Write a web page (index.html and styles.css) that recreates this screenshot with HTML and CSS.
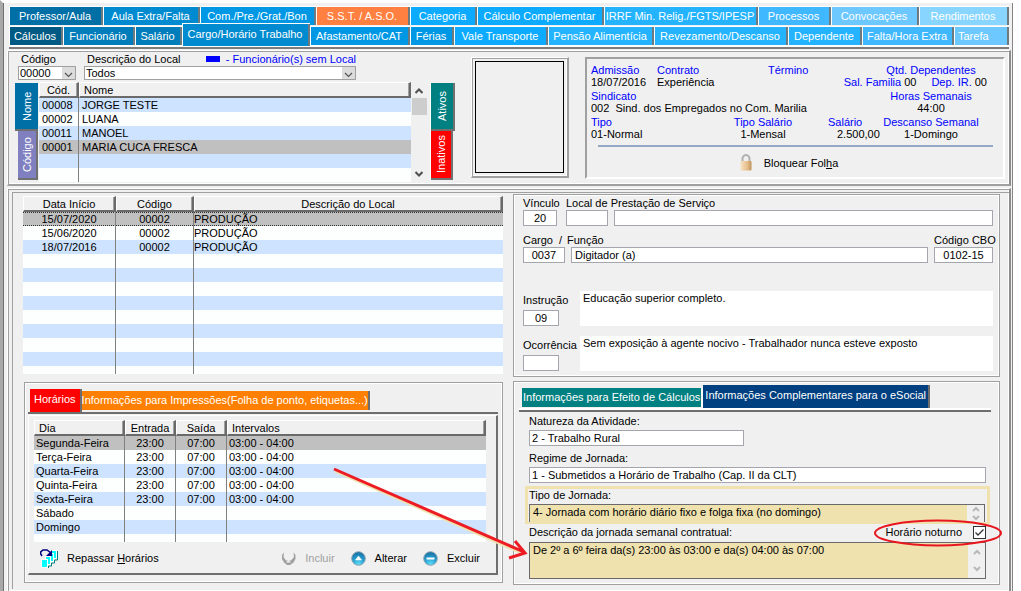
FILE: index.html
```html
<!DOCTYPE html>
<html lang="pt-BR">
<head>
    <meta charset="UTF-8">
    <meta name="viewport" content="width=device-width, initial-scale=1.0">
    <title>Cargo/Horário Trabalho</title>
    <link rel="stylesheet" href="styles.css">
</head>
<body>
<div class="app">

    <!-- Abas principais -->
    <nav class="tabs">
        <div class="tab-row row-top">
            <button class="tab b1">Professor/Aula</button>
            <button class="tab b3">Aula Extra/Falta</button>
            <button class="tab b4">Com./Pre./Grat./Bon</button>
            <button class="tab sst">S.S.T. / A.S.O.</button>
            <button class="tab b5">Categoria</button>
            <button class="tab b5">Cálculo Complementar</button>
            <button class="tab b6">IRRF Min. Relig./FGTS/IPESP</button>
            <button class="tab b7">Processos</button>
            <button class="tab b8">Convocações</button>
            <button class="tab b9">Rendimentos</button>
        </div>
        <div class="tab-row row-bottom">
            <button class="tab b0">Cálculos</button>
            <button class="tab b2">Funcionário</button>
            <button class="tab b2">Salário</button>
            <button class="tab b3 active">Cargo/Horário Trabalho</button>
            <button class="tab b4">Afastamento/CAT</button>
            <button class="tab b4">Férias</button>
            <button class="tab b5">Vale Transporte</button>
            <button class="tab b6">Pensão Alimentícia</button>
            <button class="tab b6">Revezamento/Descanso</button>
            <button class="tab b6">Dependente</button>
            <button class="tab b7">Falta/Hora Extra</button>
            <button class="tab b8 last">Tarefa</button>
        </div>
    </nav>

    <!-- Funcionários -->
    <section class="panel upper">
        <div class="people">
            <div class="filters">
                <div class="filter-code">
                    <label for="codigo">Código</label>
                    <select id="codigo"><option>00000</option></select>
                </div>
                <div class="filter-local">
                    <div class="filter-head">
                        <label for="local">Descrição do Local</label>
                        <span class="legend"><i></i>- Funcionário(s) sem Local</span>
                    </div>
                    <select id="local"><option>Todos</option></select>
                </div>
            </div>
            <div class="listing">
                <div class="side-tabs left">
                    <button class="side nome">Nome</button>
                    <button class="side codigo">Código</button>
                </div>
                <table class="grid people-grid">
                    <colgroup><col class="c-cod"><col></colgroup>
                    <thead><tr><th class="center">Cód.</th><th>Nome</th></tr></thead>
                    <tbody>
                        <tr><td>00008</td><td>JORGE TESTE</td></tr>
                        <tr><td>00002</td><td>LUANA</td></tr>
                        <tr><td>00011</td><td>MANOEL</td></tr>
                        <tr class="selected"><td>00001</td><td>MARIA CUCA FRESCA</td></tr>
                        <tr><td></td><td></td></tr>
                        <tr><td></td><td></td></tr>
                    </tbody>
                </table>
                <div class="scrollbar">
                    <svg width="8" height="8" viewBox="0 0 8 8"><path d="M0.500 6 L4 2.500 L7.500 6"/></svg>
                    <span class="thumb"></span>
                    <svg class="down" width="8" height="8" viewBox="0 0 8 8"><path d="M0.500 2 L4 5.500 L7.500 2"/></svg>
                </div>
                <div class="side-tabs right">
                    <button class="side ativos">Ativos</button>
                    <button class="side inativos">Inativos</button>
                </div>
            </div>
        </div>

        <div class="photo"><div class="photo-inner"></div></div>

        <div class="info">
            <div class="info-row r1">
                <div><b>Admissão</b><span>18/07/2016</span></div>
                <div><b>Contrato</b><span>Experiência</span></div>
                <div><b>Término</b></div>
                <div class="mid"><b>Qtd. Dependentes</b>
                    <div class="deps"><b>Sal. Familia</b><span>00</span><b class="ir">Dep. IR.</b><span>00</span></div>
                </div>
            </div>
            <div class="info-row r2">
                <div><b>Sindicato</b><span>002&nbsp; Sind. dos Empregados no Com. Marilia</span></div>
                <div class="mid"><b>Horas Semanais</b><span>44:00</span></div>
            </div>
            <div class="info-row r3">
                <div><b>Tipo</b><span>01-Normal</span></div>
                <div class="mid"><b>Tipo Salário</b><span>1-Mensal</span></div>
                <div class="salary"><b>Salário</b><span>2.500,00</span></div>
                <div class="mid"><b>Descanso Semanal</b><span>1-Domingo</span></div>
            </div>
            <hr>
            <button class="action lock">
                <svg width="12" height="17" viewBox="0 0 12 17">
                    <defs><linearGradient id="gold"><stop offset="0" stop-color="#f7e3c4"/><stop offset="0.600" stop-color="#e6c08c"/><stop offset="1" stop-color="#c2935a"/></linearGradient></defs>
                    <path d="M2.500 9V5a3.500 4 0 0 1 7 0v4" fill="none" stroke="#b0b0b0" stroke-width="2"/>
                    <rect x="0.500" y="7" width="11" height="9.500" rx="1" fill="url(#gold)"/>
                </svg>
                <span>Bloquear Fol<u>h</u>a</span>
            </button>
        </div>
    </section>

    <section class="panel lower">
        <div class="lower-inner">
            <div class="column">
                <table class="grid history">
                    <colgroup><col class="c-data"><col class="c-codigo"><col></colgroup>
                    <thead><tr><th>Data Início</th><th>Código</th><th>Descrição do Local</th></tr></thead>
                    <tbody>
                        <tr class="selected focus"><td>15/07/2020</td><td>00002</td><td>PRODUÇÃO</td></tr>
                        <tr><td>15/06/2020</td><td>00002</td><td>PRODUÇÃO</td></tr>
                        <tr><td>18/07/2016</td><td>00002</td><td>PRODUÇÃO</td></tr>
                        <tr><td></td><td></td><td></td></tr>
                        <tr><td></td><td></td><td></td></tr>
                        <tr><td></td><td></td><td></td></tr>
                        <tr><td></td><td></td><td></td></tr>
                        <tr><td></td><td></td><td></td></tr>
                        <tr><td></td><td></td><td></td></tr>
                        <tr><td></td><td></td><td></td></tr>
                        <tr><td></td><td></td><td></td></tr>
                        <tr class="cut"><td></td><td></td><td></td></tr>
                    </tbody>
                </table>

                <div class="box hours">
                    <div class="sub-tabs">
                        <button class="sub red">Horários</button>
                        <button class="sub orange">Informações para Impressões(Folha de ponto, etiquetas...)</button>
                    </div>
                    <div class="sheet">
                        <table class="grid schedule">
                            <colgroup><col class="c-dia"><col class="c-hora"><col class="c-hora"><col></colgroup>
                            <thead><tr><th>Dia</th><th class="center">Entrada</th><th class="center">Saída</th><th>Intervalos</th></tr></thead>
                            <tbody>
                                <tr class="selected"><td>Segunda-Feira</td><td>23:00</td><td>07:00</td><td>03:00 - 04:00</td></tr>
                                <tr><td>Terça-Feira</td><td>23:00</td><td>07:00</td><td>03:00 - 04:00</td></tr>
                                <tr><td>Quarta-Feira</td><td>23:00</td><td>07:00</td><td>03:00 - 04:00</td></tr>
                                <tr><td>Quinta-Feira</td><td>23:00</td><td>07:00</td><td>03:00 - 04:00</td></tr>
                                <tr><td>Sexta-Feira</td><td>23:00</td><td>07:00</td><td>03:00 - 04:00</td></tr>
                                <tr><td>Sábado</td><td></td><td></td><td></td></tr>
                                <tr><td>Domingo</td><td></td><td></td><td></td></tr>
                                <tr class="cut"><td></td><td></td><td></td><td></td></tr>
                            </tbody>
                        </table>
                        <div class="actions">
                            <button class="action">
                                <svg width="18" height="19" viewBox="0 0 18 19">
                                    <path d="M17.500 2v9h-3v3h-3v3h-3v2H2" fill="none" stroke="#007c7c"/>
                                    <g fill="#00ffff" stroke="#fff" stroke-width="1">
                                        <rect x="11.500" y="1.500" width="5" height="8"/>
                                        <rect x="8.500" y="4.500" width="5" height="8"/>
                                        <rect x="5.500" y="7.500" width="5" height="8"/>
                                        <rect x="1.500" y="10.500" width="6" height="8"/>
                                    </g>
                                    <path d="M2 7L0.700 5V3L3 1h4l4 3" fill="none" stroke="#000080" stroke-width="1.500"/>
                                    <path d="M12 1v6H6z" fill="#000080"/>
                                </svg>
                                <span>Repassar <u>H</u>orários</span>
                            </button>
                            <button class="action push" disabled>
                                <svg width="15" height="15" viewBox="0 0 15 15">
                                    <path d="M3 1.500L1 4v4l2 3.500L6 14h3l3.500-2.500L14.500 8V4l-2-2.500L13 6l-3 3.500H5L2.500 6z" fill="#a0a0a0"/>
                                    <path d="M5 11.500l2.500-3 2.500 3z" fill="#f0f0f0"/>
                                </svg>
                                <span>Incluir</span>
                            </button>
                            <button class="action">
                                <svg width="15" height="15" viewBox="0 0 15 15">
                                    <defs><radialGradient id="blue" cx="0.500" cy="0.900" r="0.900"><stop offset="0" stop-color="#5cdcf8"/><stop offset="0.550" stop-color="#2399cc"/><stop offset="1" stop-color="#1a6a9c"/></radialGradient></defs>
                                    <circle cx="7.500" cy="7.500" r="6.800" fill="url(#blue)" stroke="#8aa4b4"/>
                                    <path d="M4.500 9L7.500 5l3 4z" fill="#fff" stroke="#fff" stroke-width="0.500"/>
                                </svg>
                                <span>Alterar</span>
                            </button>
                            <button class="action">
                                <svg width="15" height="15" viewBox="0 0 15 15">
                                    <circle cx="7.500" cy="7.500" r="6.800" fill="url(#blue)" stroke="#8aa4b4"/>
                                    <rect x="3.500" y="6.500" width="8" height="2" fill="#fff"/>
                                </svg>
                                <span>Excluir</span>
                            </button>
                        </div>
                    </div>
                </div>
            </div>

            <div class="column">
                <div class="box job">
                    <div class="line">
                        <div class="field w-sm"><label for="vinculo">Vínculo</label><input id="vinculo" class="center" value="20"></div>
                        <div class="field w-md"><label for="prest">Local de Prestação de Serviço</label><input id="prest"></div>
                        <div class="field grow"><input aria-label="Local de Prestação de Serviço"></div>
                    </div>
                    <div class="line">
                        <div class="field w-md"><label for="cargo">Cargo&nbsp; /</label><input id="cargo" class="center" value="0037"></div>
                        <div class="field grow funcao"><label for="funcao">Função</label><input id="funcao" value="Digitador (a)"></div>
                        <div class="field w-lg"><label for="cbo">Código CBO</label><input id="cbo" class="center" value="0102-15"></div>
                    </div>
                    <div class="line notes first">
                        <div class="field w-note"><label for="instr">Instrução</label><input id="instr" class="center" value="09"></div>
                        <textarea aria-label="Instrução">Educação superior completo.</textarea>
                    </div>
                    <div class="line notes">
                        <div class="field w-note"><label for="ocor">Ocorrência</label><input id="ocor"></div>
                        <textarea aria-label="Ocorrência">Sem exposição à agente nocivo - Trabalhador nunca esteve exposto</textarea>
                    </div>
                </div>

                <div class="box esocial">
                    <div class="sub-tabs esocial-tabs">
                        <button class="sub teal">Informações para Efeito de Cálculos</button>
                        <button class="sub navy">Informações Complementares para o eSocial</button>
                    </div>
                    <div class="form">
                        <div class="field short"><label for="nat">Natureza da Atividade:</label><input id="nat" value="2 - Trabalho Rural"></div>
                        <div class="field"><label for="regime">Regime de Jornada:</label><input id="regime" value="1 - Submetidos a Horário de Trabalho (Cap. II da CLT)"></div>
                        <div class="field marked">
                            <label for="tipo">Tipo de Jornada:</label>
                            <div class="memo">
                                <textarea id="tipo">4- Jornada com horário diário fixo e folga fixa (no domingo)</textarea>
                                <div class="memo-bar">
                                    <svg width="8" height="6" viewBox="0 0 8 6"><path d="M1 5l3-3 3 3"/></svg>
                                    <svg width="8" height="6" viewBox="0 0 8 6"><path d="M1 1l3 3 3-3"/></svg>
                                </div>
                            </div>
                        </div>
                        <div class="describe">
                            <label for="descr">Descrição da jornada semanal contratual:</label>
                            <div class="night">
                                <label for="noturno">Horário noturno</label>
                                <input type="checkbox" id="noturno" checked>
                                <svg class="ring" width="130" height="28" viewBox="0 0 130 28"><ellipse cx="65" cy="14" rx="63" ry="12.500"/></svg>
                            </div>
                        </div>
                        <div class="memo tall">
                            <textarea id="descr">De 2º a 6º feira da(s) 23:00 às 03:00 e da(s) 04:00 às 07:00</textarea>
                            <div class="memo-bar">
                                <svg width="8" height="6" viewBox="0 0 8 6"><path d="M1 5l3-3 3 3"/></svg>
                                <svg width="8" height="6" viewBox="0 0 8 6"><path d="M1 1l3 3 3-3"/></svg>
                            </div>
                        </div>
                    </div>
                    <svg class="arrow" width="200" height="100" viewBox="0 0 200 100">
                        <path class="halo" d="M4 5L193 88"/>
                        <path d="M3 3L193 86M184 75L194 87L178 92"/>
                    </svg>
                </div>
            </div>
        </div>
    </section>
</div>
</body>
</html>
```

FILE: styles.css
```css
* {
    box-sizing: border-box;
}
body {
    margin: 0;
    background: #f0f0f0;
    color: #000;
    font: 11px/13px "Liberation Sans", Arial, sans-serif;
}
button, input, select, textarea {
    font: inherit;
    color: inherit;
    margin: 0;
    border-radius: 0;
}
button {
    border: none;
    padding: 0;
    white-space: nowrap;
    cursor: pointer;
}
label {
    white-space: nowrap;
}
.app {
    display: flex;
    flex-direction: column;
    min-height: 100vh;
    padding-left: 1px;
    border-left: 3px solid #a8a8a8;
    border-right: 8px solid #fff;
    border-top: 3px solid #fff;
    box-shadow: inset -1px 0 #858585, inset 1px 0 #707070;
}

/* abas */
.tabs {
    margin: 0 4px 1px 5px;
    padding-top: 3px;
    border-bottom: 2px solid #7c7c7c;
    box-shadow: inset 0 -2px #fff;
    padding-bottom: 2px;
}
.tab-row {
    display: grid;
    grid-auto-rows: 19px;
    margin-bottom: 1px;
}
.row-top {
    grid-template-columns: 94fr 97fr 116fr 94fr 67fr 127fr 154fr 73fr 88fr 90fr;
}
.row-bottom {
    grid-template-columns: 54fr 72fr 47fr 128fr 100fr 44fr 94fr 106fr 134fr 74fr 92fr 55fr;
    margin-bottom: 0;
}
.tab {
    min-width: 0;
    padding-right: 3px;
    color: #fff;
    border: solid #fff;
    border-width: 1px 0 0 1px;
    box-shadow: inset -2px 0 #6d7a80;
    text-align: center;
}
.tab.active {
    margin-top: -3px;
    height: 23px;
    padding-bottom: 2px;
    position: relative;
}
.tab.last {
    text-align: left;
    padding-left: 3px;
}
.b0 { background: #005a83; }
.b1 { background: #006fa6; }
.b2 { background: #007dba; }
.b3 { background: #008ad0; }
.b4 { background: #0098e4; }
.b5 { background: #0cabff; }
.b6 { background: #24b4ff; }
.b7 { background: #40b8ff; }
.b8 { background: #6cc8ff; }
.b9 { background: #88d6ff; }
.sst { background: #ff8040; }

/* painéis */
.panel {
    margin: 0 2px 0 3px;
    border: solid #fff;
    border-width: 1px 0 0 1px;
    border-right: 2px solid #8c8c8c;
    border-bottom: 2px solid #a0a0a0;
    box-shadow: inset 1px 1px #a0a0a0, inset -1px -1px #fff;
}
.upper {
    display: grid;
    grid-template-columns: minmax(0, 440fr) 98px minmax(0, 420fr);
    padding: 1px 4px 2px 7px;
    column-gap: 16px;
}
.filters {
    display: flex;
    gap: 8px;
    padding-left: 3px;
}
.filters label {
    display: block;
    line-height: 14px;
    padding-left: 3px;
}
.filter-code {
    width: 58px;
}
.filter-local {
    width: 272px;
}
.filter-head {
    display: flex;
    justify-content: space-between;
}
.legend {
    display: flex;
    align-items: center;
    gap: 6px;
    color: #00f;
    white-space: nowrap;
}
.legend i {
    width: 14px;
    height: 6px;
    background: #00f;
}
select {
    display: block;
    width: 100%;
    height: 14px;
    padding: 0 14px 0 1px;
    border: 1px solid #a0a0a0;
    appearance: none;
    line-height: 12px;
    background: #fff url("data:image/svg+xml,%3Csvg xmlns='http://www.w3.org/2000/svg' width='13' height='12'%3E%3Crect width='13' height='12' fill='%23dcdcdc'/%3E%3Cpath d='M3 6l3.500 3.500L10 6' fill='none' stroke='%23555' stroke-width='1.200'/%3E%3C/svg%3E") no-repeat right center;
}
.listing {
    display: flex;
    margin-top: 2px;
}
.side-tabs {
    display: flex;
    flex-direction: column;
    padding-top: 1px;
}
.side-tabs.left {
    width: 24px;
    align-items: flex-end;
    padding-right: 1px;
}
.side-tabs.right {
    width: 25px;
    margin-left: 3px;
    align-items: flex-start;
    border-left: 1px solid #fff;
}
.side {
    writing-mode: vertical-rl;
    transform: rotate(180deg);
    color: #fff;
    line-height: 18px;
    text-align: center;
    border-top: 2px solid #707070;
}
.nome {
    width: 23px;
    height: 48px;
    background: #006fa6;
}
.side.codigo {
    width: 20px;
    height: 49px;
    background: #8080c0;
    border-left: 2px solid #707070;
}
.ativos {
    width: 24px;
    height: 48px;
    background: #008080;
    border-left: 2px solid #707070;
}
.inativos {
    width: 22px;
    height: 49px;
    background: #f00;
    border-left: 2px solid #707070;
}

/* grades */
.grid {
    width: 100%;
    table-layout: fixed;
    border-collapse: separate;
    border-spacing: 0;
}
.grid th {
    height: 16px;
    padding: 0 4px;
    font-weight: normal;
    text-align: left;
    line-height: 12px;
    white-space: nowrap;
    border: solid #fff;
    border-width: 1px 0 0 1px;
    border-right: 2px solid #6a6a6a;
    border-bottom: 2px solid #6a6a6a;
    box-shadow: inset -1px 0 #a0a0a0;
}
.grid td {
    height: 14px;
    padding: 0 3px;
    line-height: 14px;
    white-space: nowrap;
    border-right: 1px solid #808080;
}
.grid td:last-child {
    border-right: none;
}
.grid tbody tr {
    background: #fdfffe;
}
.grid tbody tr:nth-child(odd) {
    background: #cde3ff;
}
.grid tbody tr.selected {
    background: #c0c0c0;
}
.grid .cut td {
    height: 8px;
}
.grid .center {
    text-align: center;
}
.people-grid {
    flex: 1;
}
.c-cod { width: 40px; }
.c-data { width: 93px; }
.c-codigo { width: 78px; }
.c-dia { width: 91px; }
.c-hora { width: 51px; }
.history th,
.history td {
    text-align: center;
}
.history td:last-child {
    text-align: left;
    padding-left: 0;
}
.focus td {
    padding-bottom: 0;
    background:
        repeating-linear-gradient(90deg, #333 0 1px, #c0c0c0 1px 2px) top / 100% 1px no-repeat,
        repeating-linear-gradient(90deg, #333 0 1px, #c0c0c0 1px 2px) bottom / 100% 1px no-repeat;
}
.schedule td:nth-child(2),
.schedule td:nth-child(3) {
    text-align: center;
}
.schedule td {
    padding: 0 2px;
}
.scrollbar {
    width: 16px;
    display: flex;
    flex-direction: column;
    align-items: center;
    padding: 5px 0 4px;
}
.scrollbar path {
    fill: none;
    stroke: #505050;
    stroke-width: 2;
}
.scrollbar .down {
    margin-top: auto;
}
.thumb {
    width: 15px;
    height: 17px;
    margin-top: 3px;
    background: #cdcdcd;
}

/* foto e resumo */
.photo {
    margin: 5px 0 4px;
    padding: 3px;
    border: 1px solid #fff;
    border-right: 2px solid #a0a0a0;
    border-bottom: 2px solid #a0a0a0;
    box-shadow: inset 1px 1px #a0a0a0, inset -1px -1px #fff;
}
.photo-inner {
    height: 100%;
    border: 1px solid #000;
}
.info {
    margin: 5px 0 3px;
    padding: 5px 16px 0 4px;
    border: 2px solid #a0a0a0;
    border-right-color: #fff;
    border-bottom-color: #fff;
    line-height: 12px;
    white-space: nowrap;
}
.info b {
    color: #00f;
    font-weight: normal;
}
.info-row {
    display: grid;
    margin-bottom: 2px;
}
.info-row > div {
    display: flex;
    flex-direction: column;
}
.r1 { grid-template-columns: 66px 111px minmax(0, 1fr) 112px; }
.r2 { grid-template-columns: minmax(0, 1fr) 112px; }
.r3 { grid-template-columns: 144fr 56px 37fr 47px 112px; }
.r3 .salary {
    grid-column: 4;
}
.info-row .mid {
    align-items: center;
}
.salary span {
    padding-left: 9px;
}
.deps {
    display: flex;
    gap: 3px;
    align-self: flex-end;
}
.deps .ir {
    margin-left: 12px;
}
hr {
    margin: 5px -6px 7px 7px;
    border: none;
    height: 2px;
    background: #94aac4;
}
.action {
    display: flex;
    align-items: center;
    gap: 9px;
    background: none;
}
.action:disabled {
    color: #a0a0a0;
}
.lock {
    margin: 0 auto;
    gap: 12px;
}

/* parte de baixo */
.lower {
    flex: 1;
    margin-top: 2px;
    border-bottom: none;
    padding: 3px 0 0 4px;
}
.lower-inner {
    display: grid;
    grid-template-columns: minmax(0, 480fr) minmax(0, 487fr);
    gap: 10px;
    height: 100%;
    padding: 1px 9px 4px 10px;
    border: solid #a0a0a0;
    border-width: 1px 0 0 1px;
}
.column {
    display: flex;
    flex-direction: column;
}
.history {
    margin-top: 2px;
}
.box {
    border: 1px solid #a0a0a0;
    box-shadow: inset 1px 1px #fff, inset -1px -1px #fff;
}
.hours {
    margin: 8px 0 0 1px;
    padding: 6px 4px 7px 3px;
}
.sub-tabs {
    display: flex;
    align-items: flex-end;
    border-bottom: 2px solid #6e6e6e;
    padding: 0 2px 0;
}
.sub {
    color: #fff;
    border-right: 2px solid #6e6e6e;
}
.red {
    height: 23px;
    padding: 0 4px 3px;
    background: #f00;
}
.orange {
    height: 19px;
    margin-bottom: 2px;
    padding: 0;
    background: #ff8000;
}
.sheet {
    margin-top: 1px;
    padding: 4px 10px 5px 5px;
    border: 2px solid #6e6e6e;
    border-left: 1px solid #fff;
    border-top: 1px solid #fff;
}
.actions {
    display: flex;
    align-items: center;
    gap: 16px;
    padding: 7px 6px 0;
}
.push {
    margin-left: auto;
}
input, textarea {
    border: 1px solid #a5a5ad;
    background: #fff;
    padding: 0 3px;
    width: 100%;
    min-width: 0;
}
input {
    height: 16px;
}
input.center {
    text-align: center;
}
textarea {
    display: block;
    border: none;
    resize: none;
    overflow: hidden;
}
.field {
    display: flex;
    flex-direction: column;
}
.job {
    padding: 2px 6px 5px 9px;
}
.line {
    display: flex;
    align-items: flex-end;
    gap: 6px;
    margin-bottom: 8px;
}
.w-sm { width: 34px; margin-right: 3px; }
.w-md { width: 42px; }
.w-lg { width: 59px; }
.grow { flex: 1; }
.w-note {
    width: 57px;
    flex: none;
}
.w-note input {
    width: 36px;
}
.funcao label {
    margin-left: -4px;
}
.notes {
    gap: 0;
    margin-bottom: 0;
}
.notes label {
    margin-bottom: 3px;
}
.notes textarea {
    height: 35px;
    padding: 1px 3px;
}
.notes.first {
    margin: 28px 0 10px;
}

/* eSocial */
.esocial {
    position: relative;
    margin-top: 4px;
    padding: 3px 8px 5px 5px;
}
.esocial-tabs {
    padding-left: 3px;
    box-shadow: inset 0 -2px #fff;
}
.teal {
    height: 19px;
    margin-bottom: 3px;
    padding: 0 1px;
    background: #008080;
    border-right: 2px solid #fff;
}
.navy {
    height: 23px;
    margin-bottom: 2px;
    padding: 0 2px 3px;
    background: #004080;
}
.form {
    padding: 3px 5px 0 10px;
}
.form .field {
    gap: 2px;
    margin-bottom: 6px;
}
.form .short {
    width: 215px;
}
.form input {
    padding: 0 2px;
}
.form .marked {
    margin: -3px -4px 1px;
    padding: 0 2px 0 1px;
    border: 3px solid #efe2ae;
    border-bottom-width: 2px;
}
.memo {
    display: flex;
    height: 18px;
    border: 1px solid #6a6a6a;
    border-bottom: none;
}
.memo textarea {
    background: #efe2ae;
    padding: 1px 3px;
}
.memo-bar {
    width: 17px;
    flex: none;
    display: flex;
    flex-direction: column;
    justify-content: space-around;
    align-items: center;
}
.memo-bar path {
    fill: none;
    stroke: #b8b8b8;
    stroke-width: 2;
}
.memo.tall {
    height: 37px;
    border-bottom: 1px solid #6a6a6a;
}
.describe {
    display: flex;
    justify-content: space-between;
    align-items: center;
    height: 15px;
    margin-bottom: 2px;
}
.night {
    position: relative;
    display: flex;
    align-items: center;
    gap: 11px;
}
.night input {
    appearance: none;
    width: 13px;
    height: 13px;
    border: 1px solid #333;
    background: #fff url("data:image/svg+xml,%3Csvg xmlns='http://www.w3.org/2000/svg' width='11' height='11'%3E%3Cpath d='M1.500 5.500l2.500 2.500L9.500 2.500' fill='none' stroke='%23333' stroke-width='1.300'/%3E%3C/svg%3E") no-repeat center;
}
.ring {
    position: absolute;
    right: -17px;
    top: -7px;
    pointer-events: none;
}
.ring ellipse {
    fill: none;
    stroke: #e8171f;
    stroke-width: 2;
}
.arrow {
    position: absolute;
    left: -183px;
    top: 84px;
    pointer-events: none;
}
.arrow path {
    fill: none;
    stroke: #ed1c24;
    stroke-width: 3;
}
.arrow .halo {
    stroke: #efe2ae;
}
```
